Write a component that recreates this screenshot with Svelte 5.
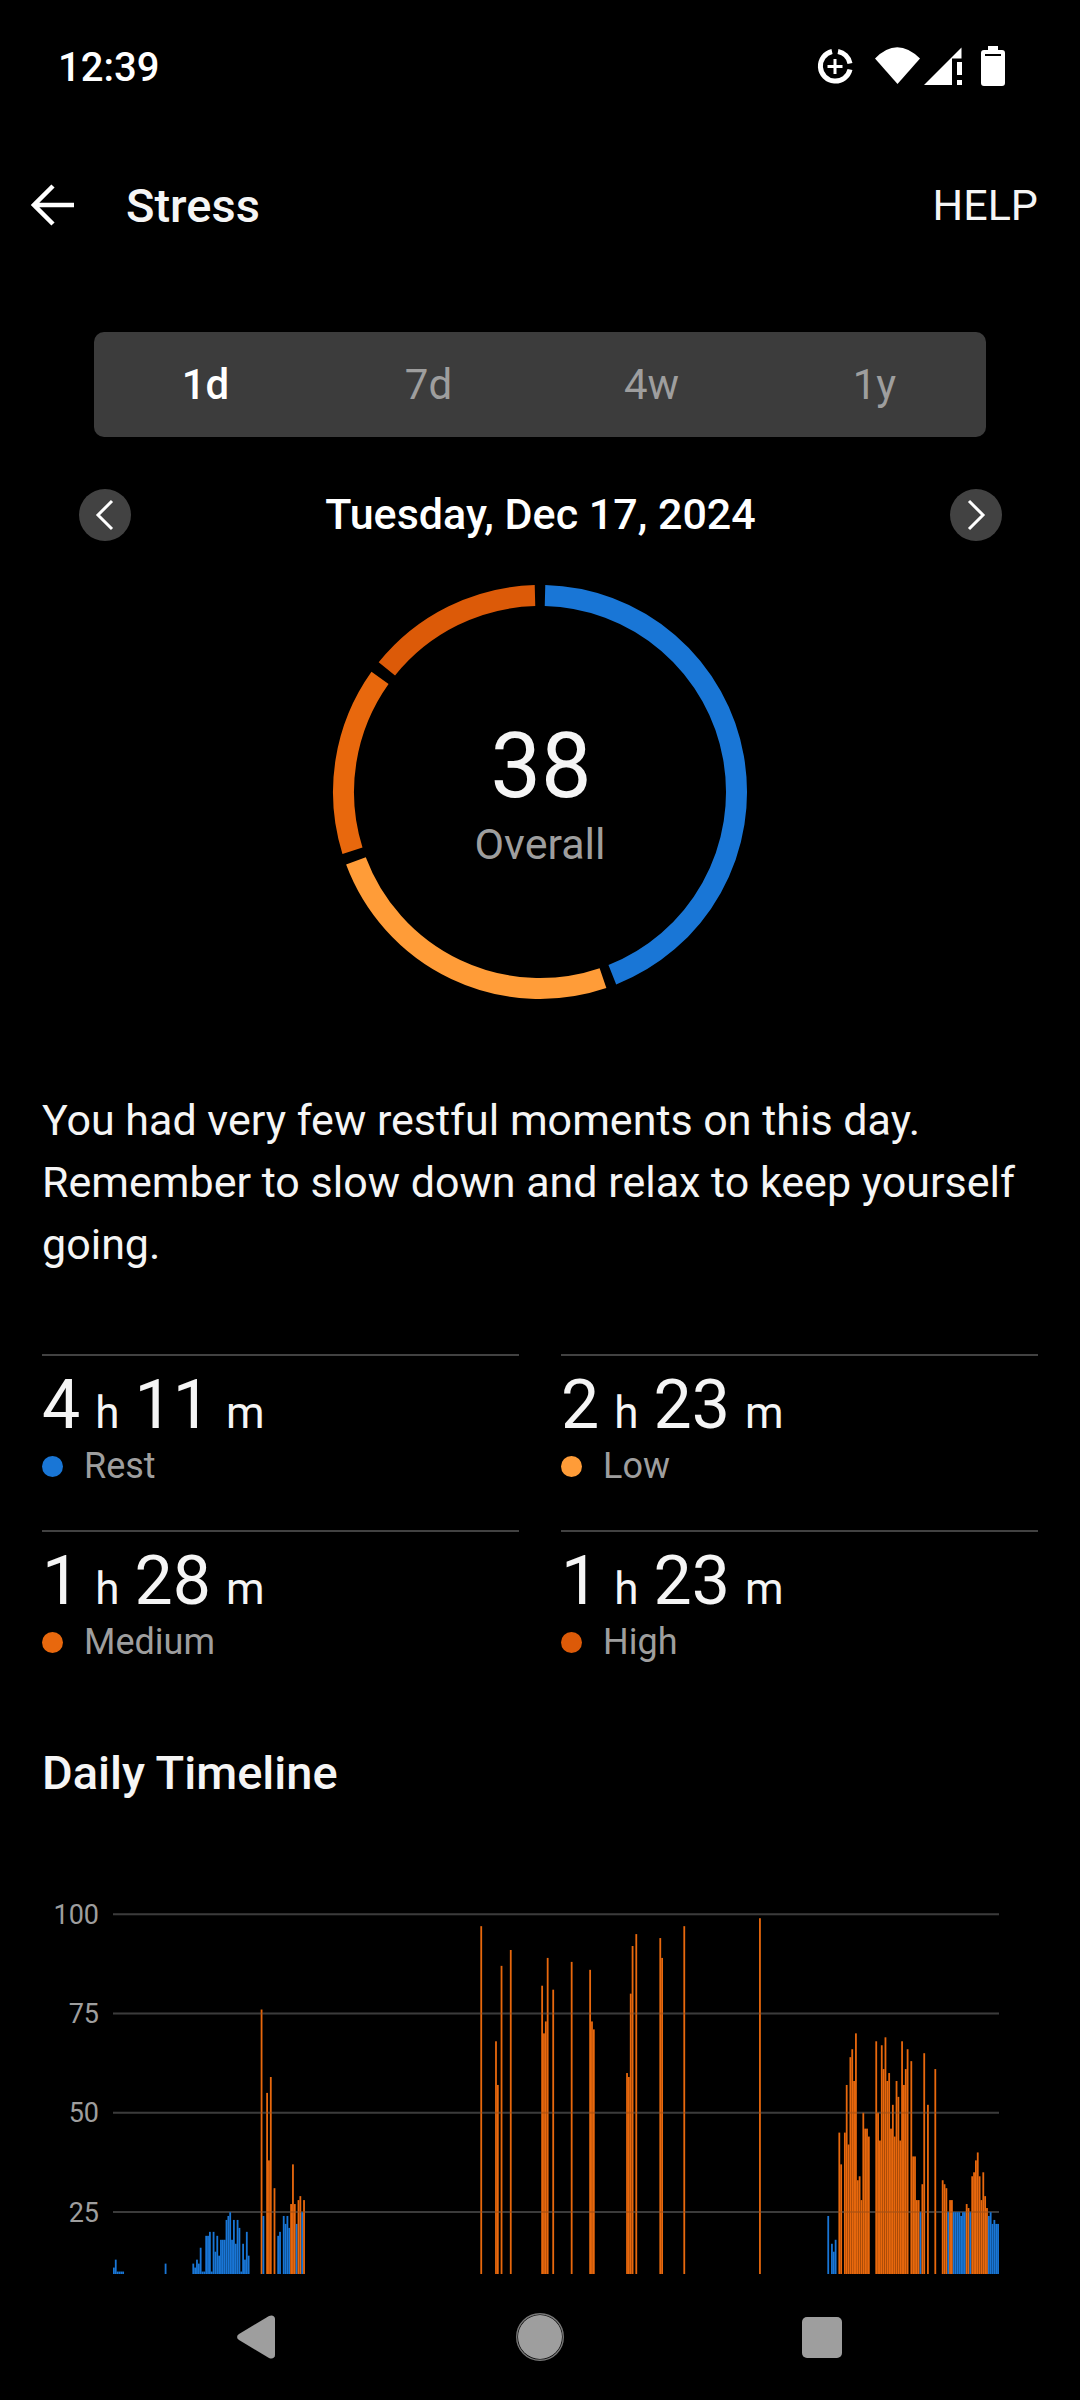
<script>
  const tabs = ['1d', '7d', '4w', '1y'];

  const stats = [
    { h: 4, m: 11, label: 'Rest', color: '#1976d6' },
    { h: 2, m: 23, label: 'Low', color: '#ff9c38' },
    { h: 1, m: 28, label: 'Medium', color: '#e8680d' },
    { h: 1, m: 23, label: 'High', color: '#dc5a08' }
  ];

  // angles in degrees, clockwise from 12 o'clock
  const segments = [
    { from: 1.46, to: 158.4, color: '#1976d6' },
    { from: 161.3, to: 249.5, color: '#ff9c38' },
    { from: 252.6, to: 305.5, color: '#e8680d' },
    { from: 308.8, to: 358.54, color: '#dc5a08' }
  ];

  function arc(from, to) {
    const r = 196.5;
    const pt = (a) => {
      const t = (a * Math.PI) / 180;
      return (210 + r * Math.sin(t)).toFixed(2) + ' ' + (210 - r * Math.cos(t)).toFixed(2);
    };
    return `M${pt(from)} A${r} ${r} 0 ${to - from > 180 ? 1 : 0} 1 ${pt(to)}`;
  }

  // stress value per 3 minute slot, [first slot, values]
  const runs = [
    [0, [11, 13, 10, 10, 10, 10]],
    [28, [12]],
    [43, [12, 11, 13, 12, 16, 10, 10, 19, 19, 20, 10, 20, 15, 19, 14, 18, 18, 18, 23, 24, 25, 18, 23, 17, 23, 21, 10, 17, 13, 20, 14]],
    [80, [76, 24]],
    [83, [55, 38, 59]],
    [87, [31]],
    [89, [19, 20]],
    [92, [24, 22, 24, 21, 27, 37, 27, 22, 28, 29, 25, 28]],
    [199, [97]],
    [207, [68, 57]],
    [210, [87]],
    [215, [91]],
    [232, [82, 70, 73, 89]],
    [238, [81]],
    [248, [88]],
    [258, [86, 73, 71]],
    [278, [60, 59, 80, 92]],
    [283, [95]],
    [296, [94, 89]],
    [309, [97]],
    [350, [99]],
    [387, [24]],
    [389, [17, 15, 18]],
    [393, [45, 37]],
    [396, [45, 57, 42, 64, 66, 58, 70, 33, 34, 28, 50, 46, 46, 44]],
    [413, [68, 50, 43, 67, 61, 69, 58, 60, 46, 52, 44, 58, 54, 43, 68, 57, 61, 66]],
    [432, [63, 39, 39, 28, 28, 25, 32, 65]],
    [441, [52]],
    [445, [61]],
    [449, [33, 32, 31, 25, 28, 28, 25, 25, 25, 25, 24, 25, 25, 27, 26, 25, 34, 35, 38, 40, 34, 28, 35, 29, 26, 24, 25, 22, 23, 22, 22]]
  ];

  const step = 886 / 480;
  const baseY = 474;
  const valueY = (v) => 412 - (v - 25) * 3.97;

  const bars = runs.flatMap(([start, values]) =>
    values.map((v, i) => ({
      x: 113 + (start + i) * step,
      y: valueY(v),
      h: baseY - valueY(v),
      color: v > 25 ? '#e8680d' : '#1976d6'
    }))
  );

  const ticks = [100, 75, 50, 25];
</script>

<div class="screen">
  <div class="status">
    <span class="time">12:39</span>
    <svg class="status-icons" width="190" height="42" viewBox="0 0 190 42" aria-hidden="true">
      <g transform="translate(-817 -46)" fill="#fff">
        <path d="M832 51.5a15 15 0 1 0 18 18" fill="none" stroke="#fff" stroke-width="5" />
        <path d="M838 51.5a15 15 0 0 1 12 12" fill="none" stroke="#fff" stroke-width="5" />
        <path d="M833.5 59h3v6h6v3h-6v6h-3v-6h-6v-3h6z" />
        <path d="M875 58.5Q897 36 920 58.5L897.5 84z" />
        <path d="M961.5 47.5V58.5H952V85H924z" />
        <rect x="957" y="62" width="5" height="13" />
        <rect x="957" y="80" width="5" height="5" />
        <path d="M988 46h10v4h4a3 3 0 0 1 3 3v30a3 3 0 0 1-3 3h-18a3 3 0 0 1-3-3V53a3 3 0 0 1 3-3h4z" />
        <rect x="985" y="54" width="16" height="2" fill="#000" />
      </g>
    </svg>
  </div>

  <header class="appbar">
    <svg class="back" width="44" height="42" viewBox="0 0 44 42" fill="none" aria-hidden="true">
      <path d="M43 21H3M22 2 3 21l19 19" stroke="#fff" stroke-width="4.5" />
    </svg>
    <h1>Stress</h1>
    <span class="help">HELP</span>
  </header>

  <div class="tabs">
    {#each tabs as tab, i}
      <span class="tab" class:active={i === 0}>{tab}</span>
    {/each}
  </div>

  <div class="date-row">
    <span class="nav-btn">
      <svg width="20" height="32" viewBox="0 0 20 32" fill="none" aria-hidden="true">
        <path d="M17 2 3 16l14 14" stroke="#fff" stroke-width="3" />
      </svg>
    </span>
    <span class="date">Tuesday, Dec 17, 2024</span>
    <span class="nav-btn">
      <svg width="20" height="32" viewBox="0 0 20 32" fill="none" aria-hidden="true">
        <path d="m3 2 14 14L3 30" stroke="#fff" stroke-width="3" />
      </svg>
    </span>
  </div>

  <div class="ring">
    <svg width="420" height="420" viewBox="0 0 420 420" fill="none" aria-hidden="true">
      {#each segments as s}
        <path d={arc(s.from, s.to)} stroke={s.color} stroke-width="21" />
      {/each}
    </svg>
    <div class="ring-label">
      <span class="score">38</span>
      <span class="overall">Overall</span>
    </div>
  </div>

  <p class="summary">
    You had very few restful moments on this day.<br />
    Remember to slow down and relax to keep yourself<br />
    going.
  </p>

  <div class="stats">
    {#each stats as s}
      <div class="stat">
        <div class="duration">
          <span class="num">{s.h}</span><span class="unit">h</span><span class="num">{s.m}</span><span class="unit">m</span>
        </div>
        <div class="legend">
          <span class="dot" style:background={s.color}></span>
          <span>{s.label}</span>
        </div>
      </div>
    {/each}
  </div>

  <h2>Daily Timeline</h2>

  <svg class="chart" width="1080" height="474" viewBox="0 0 1080 474">
    {#each ticks as t}
      <line x1="113" x2="999" y1={valueY(t)} y2={valueY(t)} stroke="#454545" stroke-width="2" />
      <text x="99" y={valueY(t) + 9.5} text-anchor="end">{t}</text>
    {/each}
    {#each bars as b}
      <rect x={b.x} y={b.y} width="1.8" height={b.h} fill={b.color} />
    {/each}
    {#each ticks as t}
      <line x1="113" x2="999" y1={valueY(t)} y2={valueY(t)} stroke="#000" stroke-opacity="0.14" stroke-width="2" />
    {/each}
  </svg>

  <nav class="navbar">
    <svg width="42" height="46" viewBox="0 0 42 46" aria-hidden="true">
      <path d="M3 20 33 2c3-1.5 6 0 6 3v36c0 3-3 4.5-6 3L3 26c-2.5-1.5-2.5-4.5 0-6z" fill="#9e9e9e" />
    </svg>
    <svg width="48" height="48" viewBox="0 0 48 48" aria-hidden="true">
      <circle cx="24" cy="24" r="22" fill="#9e9e9e" />
      <circle cx="24" cy="24" r="23.3" fill="none" stroke="#777" stroke-width="1.4" />
    </svg>
    <span class="square"></span>
  </nav>
</div>

<style>
  :global(body) {
    background: #000;
  }

  .screen {
    width: 1080px;
    height: 2400px;
    overflow: hidden;
    background: #000;
    color: #f5f5f5;
    font-family: Roboto, 'Noto Sans', sans-serif;
    font-size: 43px;
  }

  .status {
    height: 132px;
    box-sizing: border-box;
    display: flex;
    align-items: center;
    justify-content: space-between;
    padding: 2px 73px 0 58px;
  }

  .time {
    font-size: 40px;
    font-weight: 500;
    color: #fff;
  }

  .status-icons {
    display: block;
  }

  .appbar {
    height: 146px;
    box-sizing: border-box;
    display: flex;
    align-items: center;
    padding: 0 42px 0 31px;
  }

  .back {
    display: block;
  }

  h1 {
    margin: 0 0 0 51px;
    font-size: 47px;
    font-weight: 500;
  }

  .help {
    margin-left: auto;
  }

  .tabs {
    margin: 54px 94px 0;
    height: 105px;
    display: grid;
    grid-template-columns: repeat(4, 1fr);
    align-items: center;
    background: #3c3c3c;
    border-radius: 10px;
    text-align: center;
    color: #9e9e9e;
    font-size: 42px;
  }

  .tab.active {
    color: #fff;
    font-weight: 500;
  }

  .date-row {
    margin: 52px 78px 0 79px;
    height: 52px;
    display: flex;
    align-items: center;
    justify-content: space-between;
  }

  .date {
    font-weight: 500;
    color: #fff;
    margin-top: -2px;
  }

  .nav-btn {
    width: 52px;
    height: 52px;
    border-radius: 50%;
    background: #424242;
    display: flex;
    align-items: center;
    justify-content: center;
  }

  .nav-btn svg {
    display: block;
  }

  .ring {
    position: relative;
    width: 420px;
    height: 420px;
    margin: 41px auto 0;
  }

  .ring svg {
    display: block;
  }

  .ring-label {
    position: absolute;
    inset: 0;
    display: flex;
    flex-direction: column;
    align-items: center;
    justify-content: center;
  }

  .score {
    font-size: 90px;
    line-height: 104px;
    margin-left: 2px;
    color: #f5f5f5;
  }

  .overall {
    color: #9e9e9e;
    line-height: 50px;
  }

  .summary {
    margin: 87px 42px 0;
    line-height: 62px;
  }

  .stats {
    margin: 79px 42px 0;
    display: grid;
    grid-template-columns: 477px 477px;
    column-gap: 42px;
  }

  .stat {
    height: 176px;
    box-sizing: border-box;
    border-top: 2px solid #424242;
  }

  .duration {
    display: flex;
    align-items: baseline;
    box-sizing: border-box;
    height: 88px;
    padding-top: 16px;
    line-height: 66px;
  }

  .num {
    font-size: 68px;
  }

  .unit {
    margin: 0 15px;
    font-size: 44px;
  }

  .legend {
    display: flex;
    align-items: center;
    gap: 21px;
    font-size: 36px;
    line-height: 44px;
    color: #9e9e9e;
  }

  .dot {
    width: 21px;
    height: 21px;
    border-radius: 50%;
  }

  h2 {
    margin: 39px 42px 0;
    font-size: 47px;
    line-height: 55px;
    font-weight: 500;
  }

  .chart {
    display: block;
  }

  .chart text {
    font-size: 27px;
    fill: #9e9e9e;
  }

  .navbar {
    height: 126px;
    box-sizing: border-box;
    display: flex;
    justify-content: space-between;
    align-items: center;
    padding: 0 238px 0 236px;
  }

  .square {
    width: 40px;
    height: 41px;
    border-radius: 5px;
    background: #9e9e9e;
  }
</style>
